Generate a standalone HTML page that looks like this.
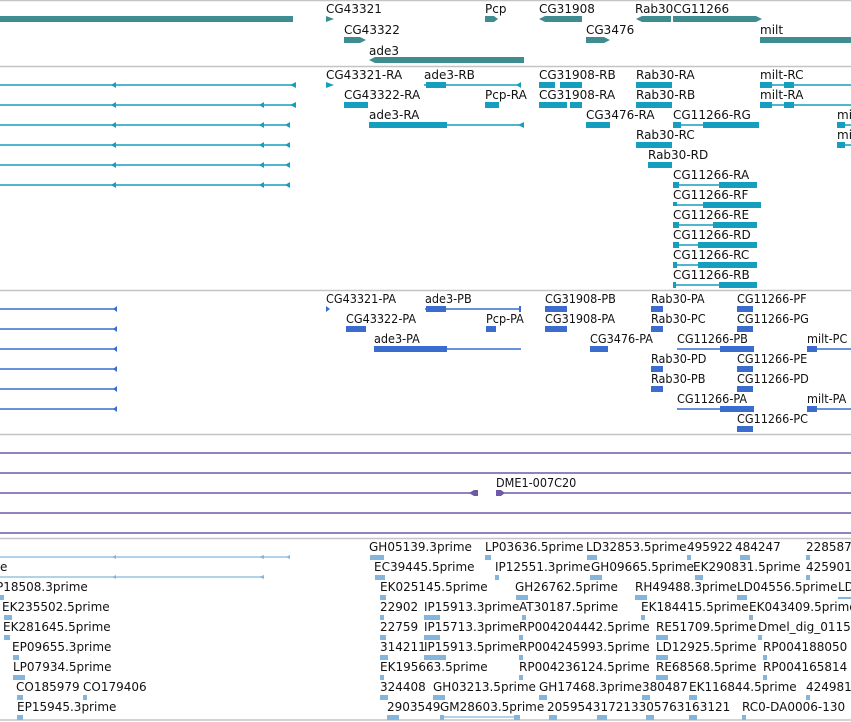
<!DOCTYPE html>
<html><head><meta charset="utf-8"><style>
html,body{margin:0;padding:0;background:#fff;width:851px;height:722px;overflow:hidden}
svg{display:block}
text{font-family:"DejaVu Sans","Liberation Sans",sans-serif;font-size:12px;fill:#111}
.p text{font-family:"DejaVu Sans Condensed","DejaVu Sans",sans-serif;font-size:12.5px}
</style></head><body>
<svg width="851" height="722" viewBox="0 0 851 722">
<!-- separators -->
<g stroke="#c4c4c4" stroke-width="1.5">
<line x1="0" y1="0.5" x2="851" y2="0.5"/><line x1="0" y1="66.5" x2="851" y2="66.5"/>
<line x1="0" y1="290.5" x2="851" y2="290.5"/><line x1="0" y1="434.5" x2="851" y2="434.5"/>
<line x1="0" y1="538.5" x2="851" y2="538.5"/><line x1="0" y1="720" x2="851" y2="720"/>
</g>

<!-- Track 1 genes -->
<g fill="#3f8d91">
<rect x="0" y="16" width="293" height="6"/>
<polygon points="326,16 334,19 326,22"/>
<polygon points="485,16 494,16 498,19 494,22 485,22"/>
<polygon points="539,19 545,16 582,16 582,22 545,22"/>
<polygon points="636,19 642,16 671,16 671,22 642,22"/>
<polygon points="673,16 756,16 762,19 756,22 673,22"/>
<polygon points="344,37 360,37 366,40 360,43 344,43"/>
<polygon points="586,37 604,37 610,40 604,43 586,43"/>
<rect x="760" y="37" width="91" height="6"/>
<polygon points="369,60 375,57 524,57 524,63 375,63"/>
</g>
<text x="326" y="13">CG43321</text><text x="485" y="13">Pcp</text><text x="539" y="13">CG31908</text><text x="635" y="13">Rab30CG11266</text>
<text x="344" y="34">CG43322</text><text x="586" y="34">CG3476</text><text x="760" y="34">milt</text>
<text x="369" y="55">ade3</text>

<!-- Track 2 transcripts -->
<g fill="#169ebe" stroke="#169ebe">
<g stroke-width="1.5">
<line x1="0" y1="85" x2="296" y2="85"/><line x1="0" y1="105" x2="296" y2="105"/>
<line x1="0" y1="125" x2="290" y2="125"/><line x1="0" y1="145" x2="290" y2="145"/>
<line x1="0" y1="165" x2="290" y2="165"/><line x1="0" y1="185" x2="290" y2="185"/>
<line x1="424" y1="85" x2="521" y2="85"/><line x1="369" y1="125" x2="524" y2="125"/>
<line x1="760" y1="85" x2="851" y2="85"/><line x1="760" y1="105" x2="851" y2="105"/>
<line x1="673" y1="125" x2="757" y2="125"/><line x1="837" y1="125" x2="851" y2="125"/><line x1="837" y1="145" x2="851" y2="145"/>
<line x1="673" y1="185" x2="757" y2="185"/><line x1="673" y1="205" x2="760" y2="205"/><line x1="673" y1="225" x2="757" y2="225"/>
<line x1="673" y1="245" x2="757" y2="245"/><line x1="673" y1="265" x2="757" y2="265"/><line x1="673" y1="285" x2="757" y2="285"/>
</g>
<g stroke="none">
<polygon points="111,85 116,82 116,88"/><polygon points="290,85 296,82 296,88"/>
<polygon points="111,105 116,102 116,108"/><polygon points="259,105 264,102 264,108"/><polygon points="290,105 296,102 296,108"/>
<polygon points="111,125 116,122 116,128"/><polygon points="259,125 264,122 264,128"/><polygon points="285,125 290,122 290,128"/>
<polygon points="111,145 116,142 116,148"/><polygon points="259,145 264,142 264,148"/><polygon points="285,145 290,142 290,148"/>
<polygon points="111,165 116,162 116,168"/><polygon points="259,165 264,162 264,168"/><polygon points="285,165 290,162 290,168"/>
<polygon points="111,185 116,182 116,188"/><polygon points="259,185 264,182 264,188"/><polygon points="285,185 290,182 290,188"/>
<polygon points="326,82 334,85 326,88"/>
<rect x="426" y="82" width="20" height="6"/><polygon points="516,85 521,82 521,88"/>
<rect x="539" y="82" width="16" height="6"/><rect x="560" y="82" width="22" height="6"/>
<rect x="636" y="82" width="36" height="6"/><rect x="760" y="82" width="12" height="6"/><rect x="784" y="82" width="10" height="6"/>
<rect x="344" y="102" width="24" height="6"/><rect x="485" y="102" width="14" height="6"/>
<rect x="539" y="102" width="28" height="6"/><rect x="570" y="102" width="12" height="6"/>
<rect x="636" y="102" width="36" height="6"/><rect x="760" y="102" width="12" height="6"/><rect x="784" y="102" width="10" height="6"/>
<rect x="369" y="122" width="78" height="6"/><polygon points="518,125 524,122 524,128"/>
<rect x="586" y="122" width="24" height="6"/><rect x="673" y="122" width="8" height="6"/><rect x="703" y="122" width="56" height="6"/>
<rect x="837" y="122" width="8" height="6"/><rect x="837" y="142" width="8" height="6"/>
<rect x="636" y="142" width="36" height="6"/><rect x="648" y="162" width="24" height="6"/>
<rect x="673" y="182" width="6" height="6"/><rect x="719" y="182" width="38" height="6"/>
<rect x="673" y="202" width="4" height="4"/><rect x="703" y="202" width="58" height="6"/>
<rect x="673" y="222" width="6" height="6"/><rect x="713" y="222" width="44" height="6"/>
<rect x="673" y="242" width="6" height="6"/><rect x="698" y="242" width="59" height="6"/>
<rect x="673" y="262" width="4" height="6"/><rect x="698" y="262" width="59" height="6"/>
<rect x="673" y="282" width="3" height="6"/><rect x="719" y="282" width="38" height="6"/>
</g></g>
<text x="326" y="79">CG43321-RA</text><text x="424" y="79">ade3-RB</text><text x="539" y="79">CG31908-RB</text><text x="636" y="79">Rab30-RA</text><text x="760" y="79">milt-RC</text>
<text x="344" y="99">CG43322-RA</text><text x="485" y="99">Pcp-RA</text><text x="539" y="99">CG31908-RA</text><text x="636" y="99">Rab30-RB</text><text x="760" y="99">milt-RA</text>
<text x="369" y="119">ade3-RA</text><text x="586" y="119">CG3476-RA</text><text x="673" y="119">CG11266-RG</text><text x="837" y="119">mi</text>
<text x="636" y="139">Rab30-RC</text><text x="837" y="139">mi</text>
<text x="648" y="159">Rab30-RD</text>
<text x="673" y="179">CG11266-RA</text><text x="673" y="199">CG11266-RF</text><text x="673" y="219">CG11266-RE</text>
<text x="673" y="239">CG11266-RD</text><text x="673" y="259">CG11266-RC</text><text x="673" y="279">CG11266-RB</text>

<!-- Track 3 proteins -->
<g fill="#3a6dcf" stroke="#3a6dcf">
<g stroke-width="1.5">
<line x1="0" y1="309" x2="117" y2="309"/><line x1="0" y1="329" x2="117" y2="329"/><line x1="0" y1="349" x2="117" y2="349"/>
<line x1="0" y1="369" x2="117" y2="369"/><line x1="0" y1="389" x2="117" y2="389"/><line x1="0" y1="409" x2="117" y2="409"/>
<line x1="425" y1="309" x2="521" y2="309"/><line x1="374" y1="349" x2="521" y2="349"/>
<line x1="677" y1="349" x2="745" y2="349"/><line x1="807" y1="349" x2="851" y2="349"/>
<line x1="677" y1="409" x2="745" y2="409"/><line x1="807" y1="409" x2="851" y2="409"/>
</g>
<g stroke="none">
<polygon points="113,309 117,306 117,312"/><polygon points="113,329 117,326 117,332"/><polygon points="113,349 117,346 117,352"/>
<polygon points="113,369 117,366 117,372"/><polygon points="113,389 117,386 117,392"/><polygon points="113,409 117,406 117,412"/>
<polygon points="326,306 330,309 326,312"/>
<rect x="426" y="306" width="20" height="6"/><rect x="519" y="306" width="2" height="6"/>
<rect x="545" y="306" width="22" height="6"/><rect x="651" y="306" width="12" height="6"/><rect x="737" y="306" width="16" height="6"/>
<rect x="346" y="326" width="20" height="6"/><rect x="486" y="326" width="10" height="6"/>
<rect x="545" y="326" width="22" height="6"/><rect x="651" y="326" width="12" height="6"/><rect x="737" y="326" width="16" height="6"/>
<rect x="374" y="346" width="73" height="6"/><rect x="590" y="346" width="18" height="6"/><rect x="720" y="346" width="34" height="6"/><rect x="807" y="346" width="10" height="6"/>
<rect x="651" y="366" width="12" height="6"/><rect x="737" y="366" width="16" height="6"/>
<rect x="651" y="386" width="12" height="6"/><rect x="737" y="386" width="16" height="6"/>
<rect x="720" y="406" width="34" height="6"/><rect x="807" y="406" width="10" height="6"/>
<rect x="737" y="426" width="16" height="6"/>
</g></g>
<g class="p">
<text x="326" y="303">CG43321-PA</text><text x="425" y="303">ade3-PB</text><text x="545" y="303">CG31908-PB</text><text x="651" y="303">Rab30-PA</text><text x="737" y="303">CG11266-PF</text>
<text x="346" y="323">CG43322-PA</text><text x="486" y="323">Pcp-PA</text><text x="545" y="323">CG31908-PA</text><text x="651" y="323">Rab30-PC</text><text x="737" y="323">CG11266-PG</text>
<text x="374" y="343">ade3-PA</text><text x="590" y="343">CG3476-PA</text><text x="677" y="343">CG11266-PB</text><text x="807" y="343">milt-PC</text>
<text x="651" y="363">Rab30-PD</text><text x="737" y="363">CG11266-PE</text>
<text x="651" y="383">Rab30-PB</text><text x="737" y="383">CG11266-PD</text>
<text x="677" y="403">CG11266-PA</text><text x="807" y="403">milt-PA</text>
<text x="737" y="423">CG11266-PC</text>
<text x="496" y="487">DME1-007C20</text>
</g>

<!-- purple track -->
<g stroke="#6f5aa8" stroke-width="1.5">
<line x1="0" y1="453" x2="851" y2="453"/><line x1="0" y1="473" x2="851" y2="473"/>
<line x1="0" y1="493" x2="476" y2="493"/><line x1="497" y1="493" x2="851" y2="493"/>
<line x1="0" y1="513" x2="851" y2="513"/><line x1="0" y1="533" x2="851" y2="533"/>
</g>
<g fill="#6f5aa8"><polygon points="469,493 474,490 478,490 478,496 474,496"/><polygon points="496,490 501,490 505,493 501,496 496,496"/></g>

<!-- EST track -->
<g fill="#84b6dd" stroke="#84b6dd">
<g stroke-width="1.2">
<line x1="0" y1="557" x2="290" y2="557"/><line x1="0" y1="577" x2="264" y2="577"/><line x1="440" y1="717" x2="518" y2="717"/>
</g>
<g stroke="none">
<polygon points="112,557 116,555 116,559"/><polygon points="259,557 264,555 264,559"/><polygon points="286,557 290,555 290,559"/>
<polygon points="112,577 116,575 116,579"/><polygon points="259,577 264,575 264,579"/>
<rect x="370" y="555" width="14" height="5"/><rect x="485" y="555" width="6" height="5"/><rect x="587" y="555" width="10" height="5"/><rect x="687" y="555" width="4" height="5"/><rect x="740" y="555" width="10" height="5"/><rect x="806" y="555" width="4" height="5"/>
<rect x="375" y="575" width="10" height="5"/><rect x="495" y="575" width="4" height="5"/><rect x="590" y="575" width="12" height="5"/><rect x="695" y="575" width="8" height="5"/><rect x="806" y="575" width="4" height="5"/>
<rect x="0" y="595" width="4" height="5"/><rect x="380" y="595" width="6" height="5"/><rect x="516" y="595" width="12" height="5"/><rect x="635" y="595" width="12" height="5"/><rect x="737" y="595" width="10" height="5"/><rect x="838" y="597" width="13" height="2"/>
<rect x="4" y="615" width="8" height="5"/><rect x="380" y="615" width="4" height="5"/><rect x="424" y="615" width="16" height="5"/><rect x="522" y="615" width="4" height="5"/><rect x="641" y="615" width="4" height="5"/><rect x="749" y="615" width="4" height="5"/>
<rect x="4" y="635" width="6" height="5"/><rect x="380" y="635" width="6" height="5"/><rect x="424" y="635" width="16" height="5"/><rect x="519" y="635" width="4" height="5"/><rect x="656" y="635" width="12" height="5"/><rect x="758" y="635" width="4" height="5"/>
<rect x="13" y="655" width="6" height="5"/><rect x="380" y="655" width="8" height="5"/><rect x="424" y="655" width="22" height="5"/><rect x="519" y="655" width="4" height="5"/><rect x="656" y="655" width="12" height="5"/><rect x="763" y="655" width="4" height="5"/>
<rect x="13" y="675" width="12" height="5"/><rect x="380" y="675" width="4" height="5"/><rect x="519" y="675" width="4" height="5"/><rect x="656" y="675" width="12" height="5"/><rect x="763" y="675" width="4" height="5"/>
<rect x="17" y="695" width="6" height="5"/><rect x="83" y="695" width="4" height="5"/><rect x="380" y="695" width="8" height="5"/><rect x="433" y="695" width="12" height="5"/><rect x="539" y="695" width="8" height="5"/><rect x="642" y="695" width="8" height="5"/><rect x="689" y="695" width="8" height="5"/><rect x="806" y="695" width="4" height="5"/>
<rect x="17" y="715" width="6" height="5"/><rect x="387" y="715" width="12" height="5"/><rect x="440" y="715" width="4" height="5"/><rect x="514" y="715" width="6" height="5"/><rect x="549" y="715" width="8" height="5"/><rect x="597" y="715" width="10" height="5"/><rect x="646" y="715" width="8" height="5"/><rect x="689" y="715" width="8" height="5"/><rect x="742" y="715" width="4" height="5"/>
</g></g>
<text x="369" y="551">GH05139.3prime</text><text x="485" y="551">LP03636.5prime</text><text x="586" y="551">LD32853.5prime</text><text x="687" y="551">495922</text><text x="735" y="551">484247</text><text x="806" y="551">228587</text>
<text x="0" y="571">e</text><text x="374" y="571">EC39445.5prime</text><text x="495" y="571">IP12551.3prime</text><text x="591" y="571">GH09665.5prime</text><text x="693" y="571">EK290831.5prime</text><text x="806" y="571">425901</text>
<text x="-4" y="591">P18508.3prime</text><text x="380" y="591">EK025145.5prime</text><text x="515" y="591">GH26762.5prime</text><text x="635" y="591">RH49488.3prime</text><text x="737" y="591">LD04556.5prime</text><text x="838" y="591">LD</text>
<text x="2" y="611">EK235502.5prime</text><text x="380" y="611">22902</text><text x="424" y="611">IP15913.3prime</text><text x="519" y="611">AT30187.5prime</text><text x="641" y="611">EK184415.5prime</text><text x="749" y="611">EK043409.5prime</text>
<text x="3" y="631">EK281645.5prime</text><text x="380" y="631">22759</text><text x="424" y="631">IP15713.3prime</text><text x="519" y="631">RP004204442.5prime</text><text x="656" y="631">RE51709.5prime</text><text x="758" y="631">Dmel_dig_0115</text>
<text x="12" y="651">EP09655.3prime</text><text x="380" y="651">314211</text><text x="424" y="651">IP15913.5prime</text><text x="519" y="651">RP004245993.5prime</text><text x="656" y="651">LD12925.5prime</text><text x="763" y="651">RP004188050</text>
<text x="13" y="671">LP07934.5prime</text><text x="380" y="671">EK195663.5prime</text><text x="519" y="671">RP004236124.5prime</text><text x="656" y="671">RE68568.5prime</text><text x="763" y="671">RP004165814</text>
<text x="16" y="691">CO185979</text><text x="83" y="691">CO179406</text><text x="380" y="691">324408</text><text x="433" y="691">GH03213.5prime</text><text x="539" y="691">GH17468.3prime</text><text x="642" y="691">380487</text><text x="689" y="691">EK116844.5prime</text><text x="806" y="691">424981</text>
<text x="17" y="711">EP15945.3prime</text><text x="387" y="711">2903549</text><text x="440" y="711">GM28603.5prime</text><text x="547" y="711">205954317213305763163121</text><text x="742" y="711">RC0-DA0006-130</text>
</svg>
</body></html>
